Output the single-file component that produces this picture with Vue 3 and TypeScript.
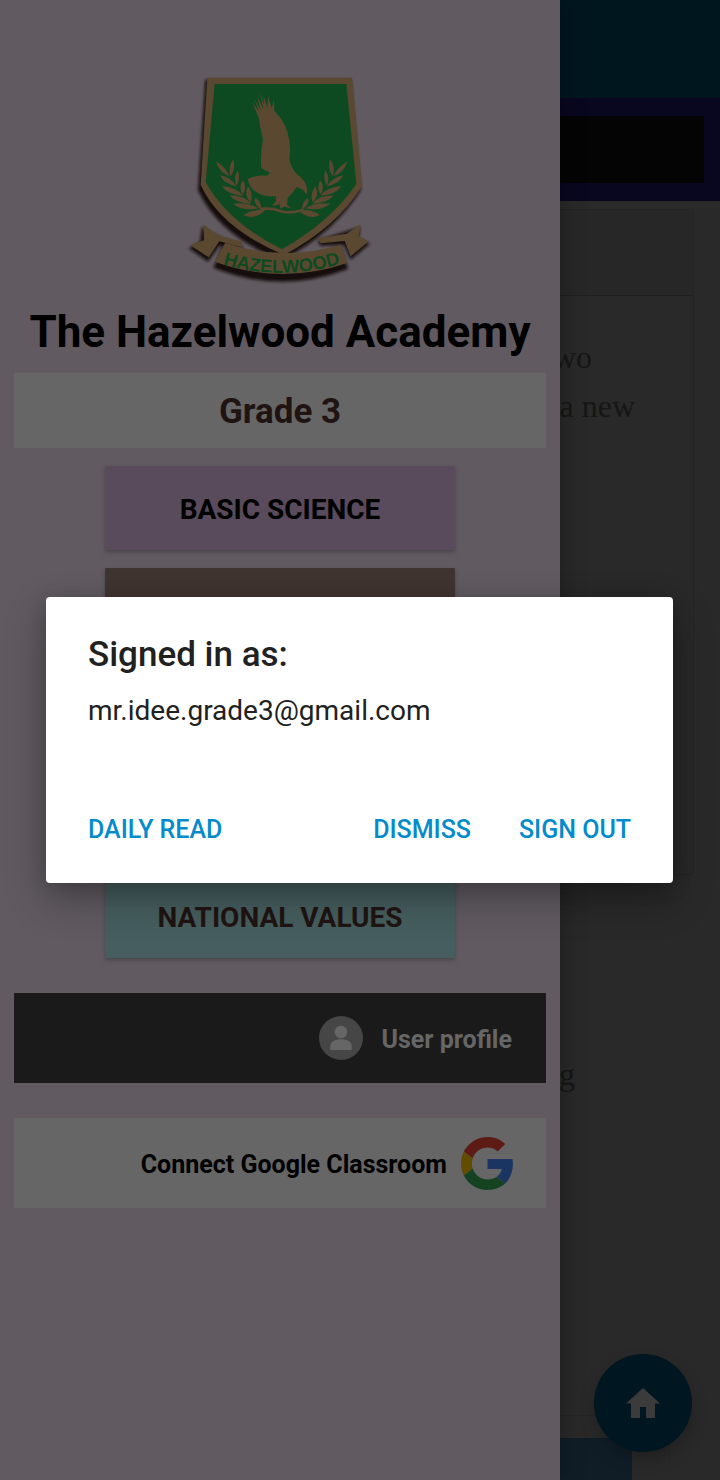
<script setup lang="ts">
interface Subject {
  id: number
  label: string
  tone: string
}

const subjects: Subject[] = [
  { id: 1, label: 'BASIC SCIENCE', tone: 'lilac' },
  { id: 2, label: '', tone: 'brown' },
  { id: 3, label: '', tone: 'brown' },
  { id: 4, label: '', tone: 'brown' },
  { id: 5, label: 'NATIONAL VALUES', tone: 'teal' },
]

const leaves: string[] = [
  'M150 334Q116 322 108 289Q134 304 150 334Z',
  'M152 334Q142 306 160 283Q168 312 152 334Z',
  'M170 364Q130 356 120 330Q154 338 170 364Z',
  'M170 362Q158 338 174 316Q182 342 170 362Z',
  'M190 392Q142 390 126 363Q168 366 190 392Z',
  'M188 388Q174 366 189 346Q202 370 188 388Z',
  'M214 416Q168 414 149 392Q192 390 214 416Z',
  'M212 412Q190 390 204 364Q222 388 212 412Z',
  'M234 430Q190 440 158 416Q206 410 234 430Z',
  'M244 434Q218 416 226 398Q246 412 244 434Z',
  'M256 435Q226 466 191 451Q214 432 256 435Z',
]
</script>

<template>
  <div class="screen">
    <main class="page">
      <header class="topbar"></header>
      <div class="banner"><div class="banner-box"></div></div>
      <article class="card">
        <div class="card-head"></div>
        <div class="card-body">
          <p class="first">two</p>
          <p>a new</p>
        </div>
      </article>
      <p class="caption">g</p>
      <div class="panel"><div class="tile"></div></div>
    </main>

    <button class="fab" type="button" aria-label="Home">
      <svg viewBox="0 0 34 30" width="34" height="30" aria-hidden="true">
        <path d="M17 0 34 15.5H29V30H20V19H14V30H5V15.5H0Z" fill="#3b3b3b" />
      </svg>
    </button>

    <nav class="drawer">
      <svg class="crest" viewBox="0 0 600 690" role="img" aria-label="Hazelwood crest">
        <defs>
          <filter id="soft" x="-20%" y="-20%" width="140%" height="140%">
            <feGaussianBlur stdDeviation="5" />
          </filter>
          <path id="motto" d="M104 590Q305 658 506 588" />
        </defs>
        <g fill="#15100f" filter="url(#soft)">
          <path d="M76 44H512L542 376Q460 506 305 586Q120 516 54 376Z" />
          <path d="M66 486 112 512 190 546 180 556 118 542 84 590 26 550 60 532Z" />
          <path d="M540 486 414 526 420 542 492 540 512 584 570 536 536 522Z" />
          <path d="M128 545Q300 606 484 548L504 612Q300 690 100 608Z" />
        </g>
        <path d="M82 38H516L546 364Q470 486 312 570Q122 490 62 360Z" fill="#5a4930" />
        <path d="M104 57H499L529 356Q456 466 306 553Q146 474 77 352Z" fill="#0e4a21" />
        <g fill="#5a4930">
          <path
            d="M238 78 252 121 250 90 262 128 264 93 275 130 281 106 283 137Q312 167 322 200Q334 240 328 282Q334 312 352 329Q376 342 382 374L379 389 370 375 350 366Q338 386 323 398L321 420 334 430 312 425 301 431 299 418 276 424 288 408 287 393Q254 398 230 382Q208 369 203 342Q226 330 262 332L270 323 244 309Q240 270 249 225Q242 196 236 158L217 112 237 140 223 101 242 136 231 94 250 132Z"
          />
          <g
            v-for="side in 2"
            :key="side"
            :transform="side === 2 ? 'translate(610 0) scale(-1 1)' : undefined"
          >
            <path v-for="leaf in leaves" :key="leaf" :d="leaf" />
          </g>
          <path
            d="M240 432Q275 428 300 438T370 434"
            fill="none"
            stroke="#5a4930"
            stroke-width="8"
          />
          <path d="M70 478 112 510 188 530 183 546 118 529 86 577 30 540 72 526Z" />
          <path d="M542 478 500 506 414 520 422 535 494 528 512 574 567 528 536 514Z" />
          <path d="M136 533Q305 592 482 539L502 594Q305 662 104 590Z" />
        </g>
        <text class="motto" fill="#0e4a21">
          <textPath href="#motto" startOffset="50%" text-anchor="middle">HAZELWOOD</textPath>
        </text>
      </svg>

      <h1>The Hazelwood Academy</h1>
      <h2>Grade 3</h2>

      <div class="subjects">
        <button
          v-for="s in subjects"
          :key="s.id"
          type="button"
          :class="['subject', s.tone]"
          :aria-label="s.label || `Subject ${s.id}`"
        >
          {{ s.label }}
        </button>
      </div>

      <button class="row profile" type="button">
        <svg viewBox="0 0 44 44" width="44" height="44" aria-hidden="true">
          <circle cx="22" cy="22" r="22" fill="#464646" />
          <circle cx="22" cy="16" r="6.3" fill="#666" />
          <path d="M11.300 34V30C11.300 26 16 23.300 22 23.300S32.700 26 32.700 30V34Z" fill="#666" />
        </svg>
        <span>User profile</span>
      </button>

      <button class="row connect" type="button">
        <span>Connect Google Classroom</span>
        <svg viewBox="0 0 48 48" width="53" height="53" aria-hidden="true">
          <path fill="#5e1b15" d="M24 9.500c3.540 0 6.710 1.220 9.210 3.600l6.850-6.850C35.900 2.380 30.470 0 24 0 14.620 0 6.510 5.380 2.560 13.220l7.980 6.190C12.430 13.720 17.740 9.500 24 9.500z" />
          <path fill="#1a3562" d="M46.980 24.550c0-1.570-.15-3.090-.38-4.550H24v9.020h12.940c-.58 2.960-2.260 5.480-4.780 7.180l7.730 6c4.510-4.180 7.090-10.360 7.090-17.650z" />
          <path fill="#644b02" d="M10.530 28.590c-.48-1.450-.76-2.990-.76-4.590s.27-3.140.76-4.590l-7.980-6.190C.92 16.460 0 20.120 0 24c0 3.880.92 7.540 2.560 10.780l7.970-6.190z" />
          <path fill="#154321" d="M24 48c6.480 0 11.930-2.130 15.890-5.810l-7.730-6c-2.150 1.450-4.920 2.300-8.160 2.300-6.260 0-11.570-4.220-13.470-9.910l-7.980 6.190C6.510 42.620 14.620 48 24 48z" />
        </svg>
      </button>
    </nav>

    <div class="overlay">
      <section class="dialog" role="dialog" aria-modal="true" aria-labelledby="dialog-title">
        <h3 id="dialog-title">Signed in as:</h3>
        <p>mr.idee.grade3@gmail.com</p>
        <div class="actions">
          <button class="start" type="button">DAILY READ</button>
          <button type="button">DISMISS</button>
          <button type="button">SIGN OUT</button>
        </div>
      </section>
    </div>
  </div>
</template>

<style>
body {
  background: #292929;
}
</style>

<style scoped>
.screen {
  position: relative;
  min-height: 100vh;
  overflow: hidden;
  font-family: Roboto, "Liberation Sans", sans-serif;
}

h1,
h2,
h3,
p {
  margin: 0;
}

button {
  margin: 0;
  padding: 0;
  border: 0;
  font-family: inherit;
  cursor: pointer;
}

.page {
  display: flex;
  flex-direction: column;
  height: 100vh;
  background: #292929;
  color: #161616;
  font-family: "Liberation Serif", serif;
  font-size: 32px;
  line-height: 49px;
  text-align: right;
}

.topbar {
  flex: none;
  height: 98px;
  background: #00161f;
}

.banner {
  flex: none;
  padding: 18px 16px;
  background: #090620;
}

.banner-box {
  height: 67px;
  background: #040404;
}

.card {
  flex: none;
  height: 664px;
  margin: 8px 26px 0 0;
  border: 1px solid #242424;
  border-radius: 4px;
}

.card-head {
  height: 85px;
  border-bottom: 1px solid #202020;
  background: #272727;
}

.card-body {
  padding: 37px 58px 0 0;
}

.first {
  padding-right: 43px;
}

.caption {
  padding: 175px 145px 0 0;
}

.panel {
  flex: 1;
  margin: 316px 50px 0 0;
  padding: 22px 37px 0 0;
  border-top: 1px solid #242424;
  border-right: 1px solid #272727;
}

.tile {
  height: 100%;
  background: #101d27;
}

.fab {
  position: absolute;
  right: 28px;
  bottom: 28px;
  display: grid;
  place-items: center;
  width: 98px;
  height: 98px;
  border-radius: 50%;
  background: #001620;
  box-shadow: 0 8px 16px rgba(0, 0, 0, 0.22);
}

.drawer {
  position: absolute;
  top: 0;
  bottom: 0;
  left: 0;
  display: flex;
  flex-direction: column;
  align-items: center;
  box-sizing: border-box;
  width: calc(100% - 160px);
  padding: 65px 14px 0;
  background: #615b61;
  box-shadow: 0 0 24px rgba(0, 0, 0, 0.3);
}

.crest {
  flex: none;
  width: 200px;
  height: 230px;
}

.motto {
  font: 700 55px "Liberation Sans", sans-serif;
}

h1 {
  margin-top: 11px;
  color: #000;
  font-size: 44px;
  font-weight: 700;
  line-height: 52px;
  white-space: nowrap;
}

h2 {
  align-self: stretch;
  margin-top: 15px;
  padding-top: 2px;
  background: #666;
  color: #201412;
  font-size: 35px;
  font-weight: 700;
  line-height: 73px;
  text-align: center;
}

.subjects {
  display: grid;
  gap: 18px;
  width: 350px;
  margin: 18px 0 35px;
}

.subject {
  height: 84px;
  padding-top: 2px;
  box-shadow: 0 2px 4px rgba(0, 0, 0, 0.25);
  color: #201412;
  font-size: 28px;
  font-weight: 700;
}

.lilac {
  background: #594b5b;
  color: #000;
}

.brown {
  background: #403431;
}

.teal {
  background: #465e5f;
}

.row {
  display: flex;
  align-items: center;
  align-self: stretch;
  justify-content: flex-end;
  height: 90px;
  margin-bottom: 35px;
  font-size: 25px;
  font-weight: 700;
}

.row span {
  padding-top: 2px;
}

.profile {
  gap: 18px;
  padding-right: 34px;
  background: #1a1a1a;
  color: #666;
}

.connect {
  gap: 14px;
  padding-right: 32px;
  background: #666;
  color: #000;
}

.overlay {
  position: absolute;
  inset: 0;
  display: grid;
  align-items: center;
  padding: 0 47px 0 46px;
}

.dialog {
  padding: 37px 42px 31px;
  border-radius: 4px;
  background: #fff;
  box-shadow: 0 16px 40px rgba(0, 0, 0, 0.3), 0 4px 20px rgba(0, 0, 0, 0.15);
  color: #212121;
}

h3 {
  font-size: 35px;
  font-weight: 500;
  line-height: 42px;
}

.dialog p {
  margin-top: 18px;
  font-size: 28px;
  line-height: 34px;
}

.actions {
  display: flex;
  gap: 48px;
  margin-top: 80px;
}

.actions button {
  background: none;
  color: #048bcc;
  font-size: 25px;
  font-weight: 500;
  line-height: 44px;
}

.actions .start {
  margin-right: auto;
}
</style>
